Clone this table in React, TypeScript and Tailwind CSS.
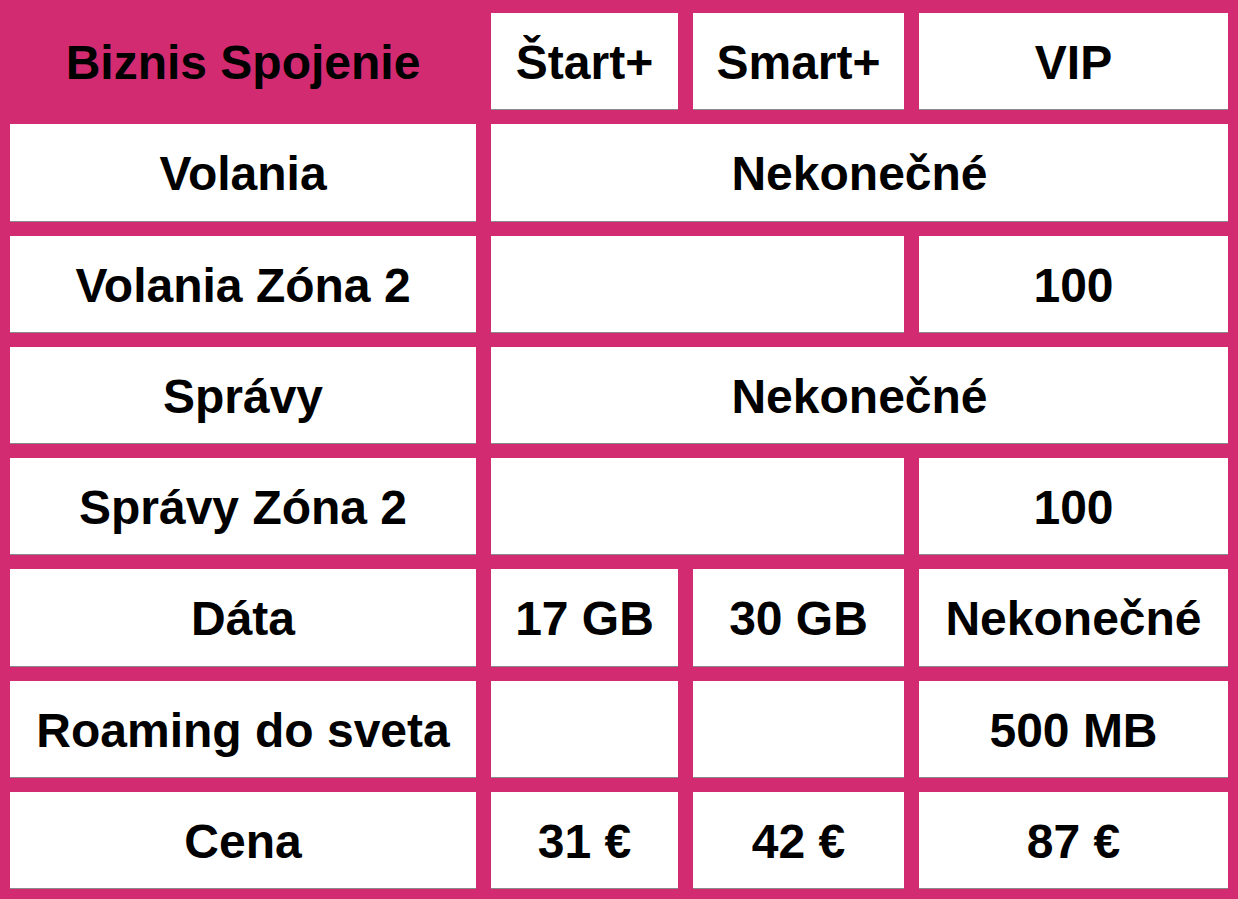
const cell =
  'flex items-center justify-center bg-white shadow-[0_1px_0_#8a8a8a] pt-[4px] text-[48px] font-bold text-black leading-none';

type Cell = { text?: string; span?: number; plain?: boolean };

const rows: Cell[][] = [
  [{ text: 'Biznis Spojenie', plain: true }, { text: 'Štart+' }, { text: 'Smart+' }, { text: 'VIP' }],
  [{ text: 'Volania' }, { text: 'Nekonečné', span: 3 }],
  [{ text: 'Volania Zóna 2' }, { span: 2 }, { text: '100' }],
  [{ text: 'Správy' }, { text: 'Nekonečné', span: 3 }],
  [{ text: 'Správy Zóna 2' }, { span: 2 }, { text: '100' }],
  [{ text: 'Dáta' }, { text: '17 GB' }, { text: '30 GB' }, { text: 'Nekonečné' }],
  [{ text: 'Roaming do sveta' }, {}, {}, { text: '500 MB' }],
  [{ text: 'Cena' }, { text: '31 €' }, { text: '42 €' }, { text: '87 €' }],
];

const spanClass: Record<number, string> = {
  1: '',
  2: 'col-span-2',
  3: 'col-span-3',
};

export default function App() {
  return (
    <div
      className="h-[899px] w-[1238px] bg-[#d22b72] px-[10px] pt-[13px] pb-[11px]"
      style={{ fontFamily: '"Liberation Sans", Arial, sans-serif' }}
    >
      <div className="grid h-full grid-cols-[466px_187px_211px_309px] grid-rows-8 gap-[15px]">
        {rows.map((row, i) =>
          row.map((c, j) => (
            <div
              key={`${i}-${j}`}
              className={
                c.plain
                  ? 'flex items-center justify-center pt-[4px] text-[48px] font-bold text-black leading-none'
                  : `${cell} ${spanClass[c.span ?? 1]}`
              }
            >
              {c.text}
            </div>
          ))
        )}
      </div>
    </div>
  );
}
